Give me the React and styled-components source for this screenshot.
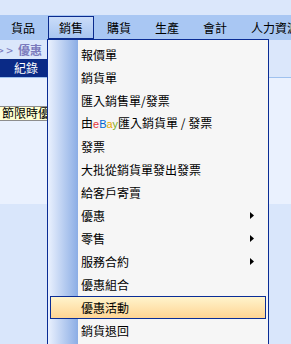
import React from "react";
import styled, { createGlobalStyle } from "styled-components";

const GS = createGlobalStyle`
body {
  margin: 0;
  background: #d9e6fb;
  font-family: "Noto Sans CJK TC", "Noto Sans", sans-serif;
  font-size: 12px;
  color: #000;
}
`;

const Page = styled.div`
width: 291px;
height: 344px;
display: flex;
flex-direction: column;
overflow: hidden;
position: relative;
`;

const TopBand = styled.div`
height: 15px;
background: #dbe7fb;
`;

const MenuBar = styled.div`
height: 25px;
display: flex;
background: #a9c7f3;
white-space: nowrap;
position: relative;
z-index: 5;
`;

const Slot = styled.div`
width: 48px;
flex: 0 0 48px;
position: relative;
display: flex;
`;

const Label = styled.div`
box-sizing: border-box;
display: flex;
align-items: center;
justify-content: ${p => (p.$active ? "center" : "flex-start")};
padding-left: ${p => (p.$active ? "0" : "11px")};
width: ${p => (p.$active ? "46px" : "48px")};
height: ${p => (p.$active ? "23px" : "25px")};
margin-top: ${p => (p.$active ? "1px" : "0")};
border: ${p => (p.$active ? "1px solid #0b2b8e" : "none")};
background: ${p => (p.$active ? "linear-gradient(#cadcf8, #a8c5f1)" : "transparent")};
line-height: 1;
`;

const Drop = styled.div`
position: absolute;
left: -1px;
top: 24px;
width: 222px;
height: 320px;
box-sizing: border-box;
border: 1px solid #0a2c94;
padding-top: 3px;
background: linear-gradient(to right, #eaf1fe, #8badE5) 0 0 / 30px 100% no-repeat, #f6f6f6;
z-index: 10;
`;

const Row = styled.div`
box-sizing: border-box;
height: 23px;
margin: 0 2px;
display: flex;
align-items: center;
padding: 0 10px 0 30px;
border: 1px solid ${p => (p.$hot ? "#0a2d96" : "transparent")};
background: ${p => (p.$hot ? "linear-gradient(#fff4cc, #ffd493)" : "transparent")};
line-height: 1;
`;

const RowText = styled.span`
flex: 1;
`;

const Ebay = styled.span`
font-family: "Liberation Sans", Arial, sans-serif;
font-size: 11px;
`;

const Letter = styled.span`
color: ${p => p.$c};
`;

const Body = styled.div`
flex: 1;
display: flex;
flex-direction: column;
`;

const Header = styled.div`
height: 37px;
background: #dbe7fb;
border-bottom: 1px solid #9fc1ee;
display: flex;
flex-direction: column;
`;

const Crumb = styled.div`
height: 19px;
display: flex;
align-items: center;
margin-left: -3px;
color: #7b7bbd;
white-space: nowrap;
line-height: 1;
`;

const CrumbCur = styled.b`
margin-left: 5px;
`;

const Tab = styled.div`
width: 80px;
height: 18px;
background: #0a2a86;
color: #fff;
display: flex;
align-items: center;
padding-left: 14px;
box-sizing: border-box;
line-height: 1;
`;

const Main = styled.div`
height: 126px;
background: #eaf1fe;
padding-top: 26px;
box-sizing: border-box;
`;

const Tip = styled.div`
display: inline-flex;
align-items: center;
height: 15px;
box-sizing: border-box;
margin-left: -1px;
padding: 0 4px 0 2px;
background: #ffffd2;
border: 1px solid #8d8d8d;
white-space: nowrap;
line-height: 1;
`;

const Foot = styled.div`
flex: 1;
background: #d9e6fb;
`;

const Arrow = () => (
  <svg width="5" height="7" viewBox="0 0 5 7">
    <path d="M0 0L4 3.5L0 7Z" fill="#000" />
  </svg>
);

const menus = ["貨品", "銷售", "購貨", "生產", "會計", "人力資源"];

const items = [
  { t: "報價單" },
  { t: "銷貨單" },
  { t: "匯入銷售單/發票" },
  { t: "ebay" },
  { t: "發票" },
  { t: "大批從銷貨單發出發票" },
  { t: "給客戶寄賣" },
  { t: "優惠", sub: true },
  { t: "零售", sub: true },
  { t: "服務合約", sub: true },
  { t: "優惠組合" },
  { t: "優惠活動", hot: true },
  { t: "銷貨退回" },
];

export default function App() {
  return (
    <Page>
      <GS />
      <TopBand />
      <MenuBar>
        {menus.map(m => (
          <Slot key={m}>
            <Label $active={m === "銷售"}>{m}</Label>
            {m === "銷售" && (
              <Drop>
                {items.map(it => (
                  <Row key={it.t} $hot={it.hot}>
                    <RowText>
                      {it.t === "ebay" ? (
                        <>
                          由
                          <Ebay>
                            <Letter $c="#e53238">e</Letter>
                            <Letter $c="#0064d2">B</Letter>
                            <Letter $c="#e6a800">a</Letter>
                            <Letter $c="#7fae1b">y</Letter>
                          </Ebay>
                          匯入銷貨單 / 發票
                        </>
                      ) : (
                        it.t
                      )}
                    </RowText>
                    {it.sub && <Arrow />}
                  </Row>
                ))}
              </Drop>
            )}
          </Slot>
        ))}
      </MenuBar>
      <Body>
        <Header>
          <Crumb>
            &gt; &gt;<CrumbCur>優惠</CrumbCur>
          </Crumb>
          <Tab>紀錄</Tab>
        </Header>
        <Main>
          <Tip>節限時優惠</Tip>
        </Main>
        <Foot />
      </Body>
    </Page>
  );
}
